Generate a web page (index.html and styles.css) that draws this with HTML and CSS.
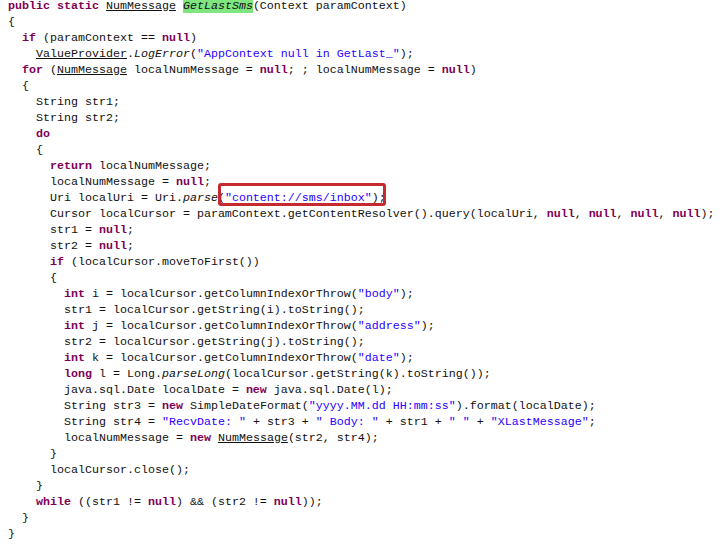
FILE: index.html
```html
<!DOCTYPE html>
<html>
<head>
<meta charset="utf-8">
<link rel="stylesheet" href="styles.css">
</head>
<body>
<div class="code-wrap">
<div class="code">
<div class="ln"><span class="kw">public</span> <span class="kw">static</span> <span class="ty">NumMessage</span> <span class="hl">GetLastSms</span>(Context paramContext)</div>
<div class="ln">{</div>
<div class="ln i1"><span class="kw">if</span> (paramContext == <span class="kw">null</span>)</div>
<div class="ln i2"><span class="ty">ValueProvider</span>.<span class="it">LogError</span>(<span class="st">"AppContext null in GetLast_"</span>);</div>
<div class="ln i1"><span class="kw">for</span> (<span class="ty">NumMessage</span> localNumMessage = <span class="kw">null</span>; ; localNumMessage = <span class="kw">null</span>)</div>
<div class="ln i1">{</div>
<div class="ln i2">String str1;</div>
<div class="ln i2">String str2;</div>
<div class="ln i2"><span class="kw">do</span></div>
<div class="ln i2">{</div>
<div class="ln i3"><span class="kw">return</span> localNumMessage;</div>
<div class="ln i3">localNumMessage = <span class="kw">null</span>;</div>
<div class="ln i3">Uri localUri = Uri.<span class="it">parse</span>(<span class="st">"content://sms/inbox"</span>);</div>
<div class="ln i3">Cursor localCursor = paramContext.getContentResolver().query(localUri, <span class="kw">null</span>, <span class="kw">null</span>, <span class="kw">null</span>, <span class="kw">null</span>);</div>
<div class="ln i3">str1 = <span class="kw">null</span>;</div>
<div class="ln i3">str2 = <span class="kw">null</span>;</div>
<div class="ln i3"><span class="kw">if</span> (localCursor.moveToFirst())</div>
<div class="ln i3">{</div>
<div class="ln i4"><span class="kw">int</span> i = localCursor.getColumnIndexOrThrow(<span class="st">"body"</span>);</div>
<div class="ln i4">str1 = localCursor.getString(i).toString();</div>
<div class="ln i4"><span class="kw">int</span> j = localCursor.getColumnIndexOrThrow(<span class="st">"address"</span>);</div>
<div class="ln i4">str2 = localCursor.getString(j).toString();</div>
<div class="ln i4"><span class="kw">int</span> k = localCursor.getColumnIndexOrThrow(<span class="st">"date"</span>);</div>
<div class="ln i4"><span class="kw">long</span> l = Long.<span class="it">parseLong</span>(localCursor.getString(k).toString());</div>
<div class="ln i4">java.sql.Date localDate = <span class="kw">new</span> java.sql.Date(l);</div>
<div class="ln i4">String str3 = <span class="kw">new</span> SimpleDateFormat(<span class="st">"yyyy.MM.dd HH:mm:ss"</span>).format(localDate);</div>
<div class="ln i4">String str4 = <span class="st">"RecvDate: "</span> + str3 + <span class="st">" Body: "</span> + str1 + <span class="st">" "</span> + <span class="st">"XLastMessage"</span>;</div>
<div class="ln i4">localNumMessage = <span class="kw">new</span> <span class="ty">NumMessage</span>(str2, str4);</div>
<div class="ln i3">}</div>
<div class="ln i3">localCursor.close();</div>
<div class="ln i2">}</div>
<div class="ln i2"><span class="kw">while</span> ((str1 != <span class="kw">null</span>) &amp;&amp; (str2 != <span class="kw">null</span>));</div>
<div class="ln i1">}</div>
<div class="ln">}</div>
</div>
<div class="mark"></div>
</div>
</body>
</html>
```

FILE: styles.css
```css
html, body {
  margin: 0;
  padding: 0;
  background: #ffffff;
}
.code-wrap {
  position: relative;
  padding-left: 8px;
}
.code {
  margin-top: -2px;
  font-family: "Liberation Mono", "Courier New", monospace;
  font-size: 11.67px;
  line-height: 16px;
  color: #111111;
}
.ln {
  white-space: pre;
  height: 16px;
}
.i1 { padding-left: 14px; }
.i2 { padding-left: 28px; }
.i3 { padding-left: 42px; }
.i4 { padding-left: 56px; }
.kw {
  color: #7f0055;
  font-weight: bold;
}
.st {
  color: #2a00ff;
}
.ty {
  text-decoration: underline;
}
.it {
  font-style: italic;
}
.hl {
  font-style: italic;
  background: #7fe57f;
}
.mark {
  position: absolute;
  left: 218px;
  top: 185px;
  width: 162px;
  height: 17px;
  border: 3px solid #c42a30;
  border-radius: 3px;
}
```
